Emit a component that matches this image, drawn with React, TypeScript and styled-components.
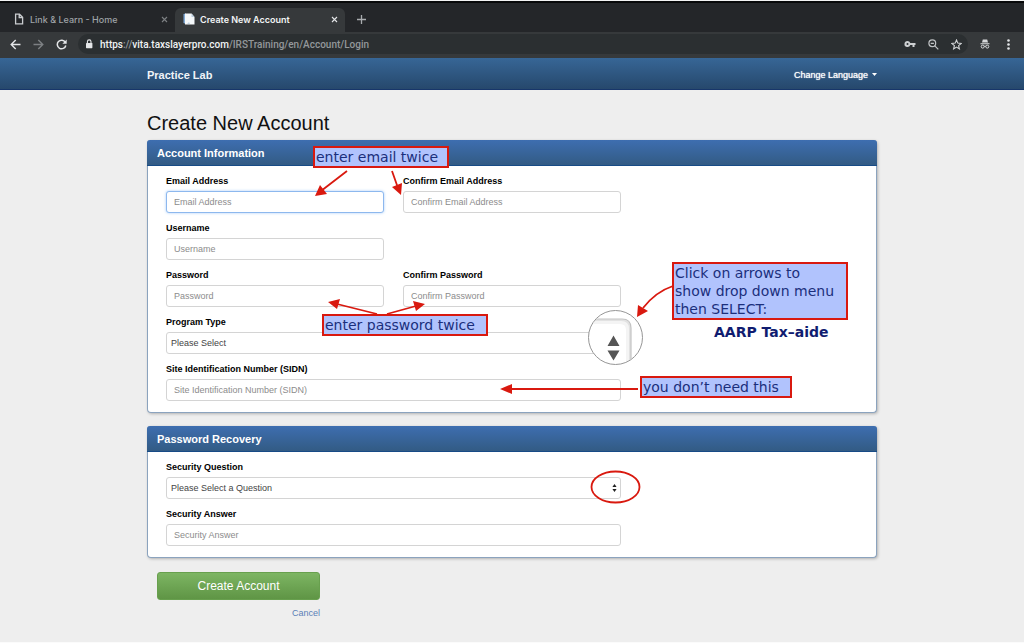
import React from "react";
import styled, { createGlobalStyle, css } from "styled-components";

const GlobalStyle = createGlobalStyle`
  *, *::before, *::after { box-sizing: border-box; }
  body {
    margin: 0;
    background: #eeeeee;
    color: #111;
    font-family: "Liberation Sans", Arial, sans-serif;
  }
`;

const Shell = styled.div`
  min-height: 100vh;
  border-top: 1px solid #f2f2f2;
  border-bottom: 1px solid #fbfbfb;
`;

const TabStrip = styled.div`
  display: flex;
  align-items: flex-end;
  height: 31px;
  border-top: 2px solid #08090a;
  background: #242629;
  font-family: Roboto, sans-serif;
`;

const Tab = styled.div<{ $active?: boolean }>`
  display: flex;
  align-items: center;
  gap: 5px;
  flex: 0 1 ${(p) => (p.$active ? "170px" : "175px")};
  height: 24px;
  padding: 0 5px 2px ${(p) => (p.$active ? "8px" : "13px")};
  border-radius: 6px 6px 0 0;
  background: ${(p) => (p.$active ? "#36393b" : "transparent")};
  color: ${(p) => (p.$active ? "#f1f3f4" : "#9fa3a7")};
  font-family: Inter, sans-serif;
  font-size: 9px;
  font-weight: ${(p) => (p.$active ? 600 : 500)};
`;

const TabTitle = styled.span`
  flex: 1;
  white-space: nowrap;
`;

const ChromeButton = styled.button<{ $dim?: boolean }>`
  display: flex;
  align-items: center;
  justify-content: center;
  width: 12px;
  height: 12px;
  padding: 0;
  border: 0;
  background: none;
  color: ${(p) => (p.$dim ? "#7d8083" : "#e4e6e8")};
`;

const NewTab = styled.div`
  display: flex;
  align-items: center;
  height: 24px;
  padding: 0 0 2px 10px;
`;

const Toolbar = styled.div`
  display: flex;
  align-items: center;
  gap: 11px;
  height: 26px;
  padding: 0 10px 2px 9px;
  background: #36393b;
`;

const AddressBar = styled.div`
  display: flex;
  flex: 1;
  align-items: center;
  gap: 11px;
  height: 20px;
  padding: 0 6px 0 5px;
  border-radius: 10px;
  background: #2b2f31;
`;

const Url = styled.span`
  flex: 1;
  color: #94989b;
  font-family: Roboto, sans-serif;
  font-size: 10px;
  font-weight: 500;
  white-space: nowrap;
  margin-left: -6px;
`;

const UrlHost = styled.span`
  color: #f1f3f4;
`;

const NavBar = styled.header`
  height: 32px;
  padding: 0 16px;
  border-bottom: 1px solid #17366a;
  background: linear-gradient(#376696, #26486c);
  color: #fff;
`;

const NavInner = styled.div`
  display: flex;
  align-items: center;
  justify-content: space-between;
  max-width: 730px;
  height: 31px;
  margin: 0 auto;
  padding-top: 2px;
`;

const Brand = styled.a`
  color: #f0f4f8;
  font-size: 11px;
  font-weight: 700;
  text-decoration: none;
`;

const LanguageButton = styled.button`
  display: flex;
  align-items: center;
  gap: 4px;
  padding: 0;
  border: 0;
  background: none;
  color: #fff;
  font: 9px "Liberation Sans", Arial, sans-serif;
  text-shadow: 0 0 1px #fff;
`;

const Page = styled.main`
  padding: 0 16px;
`;

const Content = styled.div`
  position: relative;
  max-width: 730px;
  min-height: 552px;
  margin: 0 auto;
  padding-top: 20px;
`;

const Title = styled.h1`
  margin: 0 0 4px;
  color: #111;
  font-size: 20px;
  font-weight: 400;
  line-height: 26px;
`;

const Panel = styled.section`
  margin-bottom: 13px;
  border: 1px solid #8ba3be;
  border-top: 0;
  border-radius: 4px;
  background: #fff;
  box-shadow: 1px 1px 3px rgba(0, 0, 0, 0.25);
`;

const PanelHeading = styled.h2`
  height: 26px;
  margin: 0 -1px;
  padding: 0 10px;
  border-bottom: 1px solid #174b86;
  border-radius: 3px 3px 0 0;
  background: linear-gradient(#3e6eb0, #325b84);
  color: #fff;
  font-size: 11px;
  line-height: 26px;
`;

const Fields = styled.div`
  display: grid;
  grid-template-columns: 1fr 1fr;
  gap: 8px 19px;
  max-width: 491px;
  padding: 8px 18px 11px;
`;

const Field = styled.div<{ $wide?: boolean; $first?: boolean }>`
  display: flex;
  flex-direction: column;
  gap: 3px;
  ${(p) => p.$wide && "grid-column: 1 / -1;"}
  ${(p) => p.$first && "grid-column-start: 1;"}
`;

const Label = styled.label`
  color: #000;
  font-size: 9px;
  font-weight: 700;
  line-height: 14px;
`;

const control = css`
  width: 100%;
  height: 22px;
  border: 1px solid #d4d4d4;
  border-radius: 3px;
  background: #fff;
  font: 9px "Liberation Sans", Arial, sans-serif;
  outline: 0;
`;

const Input = styled.input<{ $focused?: boolean }>`
  ${control}
  padding: 0 7px;
  ${(p) => p.$focused && "border-color: #8db8ee; box-shadow: 0 0 3px #a9cdf8;"}
  &::placeholder { color: #8c8c8c; opacity: 1; }
`;

const SelectWrap = styled.div`
  display: grid;
  align-items: center;
  & > * { grid-area: 1 / 1; }
  & > svg { justify-self: end; margin-right: 4px; pointer-events: none; }
`;

const Select = styled.select`
  ${control}
  appearance: none;
  padding: 0 4px;
  color: #444;
`;

const Actions = styled.div`
  display: flex;
  flex-direction: column;
  align-items: flex-end;
  gap: 6px;
  width: 163px;
  margin: 14px 0 0 10px;
`;

const Submit = styled.button`
  width: 100%;
  height: 28px;
  border: 1px solid #68a04e;
  border-radius: 3px;
  background: linear-gradient(#7db563, #5f9545);
  color: #fff;
  font: 12px "Liberation Sans", Arial, sans-serif;
`;

const Cancel = styled.a`
  color: #5b80b8;
  font-size: 9px;
  line-height: 14px;
  text-decoration: none;
`;

const Drawing = styled.svg`
  position: absolute;
  top: 0;
  left: 0;
  overflow: visible;
  pointer-events: none;
`;

const Note = styled.p<{ $x: number; $y: number; $w: number }>`
  position: absolute;
  left: ${(p) => p.$x}px;
  top: ${(p) => p.$y}px;
  width: ${(p) => p.$w}px;
  margin: 0;
  padding: 0 1px;
  border: 2px solid #d9190f;
  background: #b1c3fd;
  color: #1b2f7c;
  font: 14px/18px "DejaVu Sans", sans-serif;
  white-space: nowrap;
`;

const PlainNote = styled(Note)`
  border-color: transparent;
  background: none;
  color: #101c70;
  font-weight: 700;
`;

const CloseIcon = () => (
  <svg width="7" height="7" viewBox="0 0 7 7" stroke="currentColor" strokeWidth="1.1">
    <path d="M1 1l5 5M6 1L1 6" />
  </svg>
);

type FieldProps = {
  id: string;
  label: string;
  type?: string;
  wide?: boolean;
  first?: boolean;
  focused?: boolean;
};

const TextField = ({ id, label, type = "text", wide, first, focused }: FieldProps) => (
  <Field $wide={wide} $first={first}>
    <Label htmlFor={id}>{label}</Label>
    <Input id={id} type={type} placeholder={label} $focused={focused} />
  </Field>
);

const SelectField = ({ id, label, option }: { id: string; label: string; option: string }) => (
  <Field $wide>
    <Label htmlFor={id}>{label}</Label>
    <SelectWrap>
      <Select id={id}>
        <option>{option}</option>
      </Select>
      <svg width="5" height="8" viewBox="0 0 5 8" fill="#222">
        <path d="M2.5 0L4.6 3H.4zM2.5 8L.4 5h4.2z" />
      </svg>
    </SelectWrap>
  </Field>
);

const Annotations = () => (
  <>
    <Drawing width="730" height="552" viewBox="147 90 730 552" fill="none">
      <g stroke="#d9190f" strokeWidth="1.8">
        <path d="M347 171L321 191M392 171L398 188M377 314L337 304M387 314L416 306M638 389H510M673 286C658 291 650 299 643 308" />
        <ellipse cx="615.5" cy="487" rx="24" ry="15.5" />
      </g>
      <g fill="#d9190f">
        <path d="M315 196L320 185L327 194zM401 195L392 187L402 183zM328 302L340 299L337 309zM425 304L413 301L416 311zM500 389L512 384V394zM637 317L638 305L648 311z" />
      </g>
      <clipPath id="lens"><circle cx="615.5" cy="337.5" r="26.5" /></clipPath>
      <circle cx="615.5" cy="337.5" r="27" fill="#fff" />
      <g clipPath="url(#lens)">
        <path d="M585 321.500H620Q628.500 321.500 628.500 330V370" stroke="#f4f4f4" strokeWidth="5" />
        <path d="M585 320H621Q630 320 630 329V370" stroke="#e2e2e2" strokeWidth="2" />
        <path d="M585 319H622Q631 319 631 328V370" stroke="#c3c3c3" strokeWidth="1.2" />
      </g>
      <circle cx="615.5" cy="337.5" r="27" stroke="#969696" />
      <path d="M613.5 335.5L619.5 346H607.5zM613.5 360.5L607.5 350.500H619.5z" fill="#555" />
    </Drawing>
    <Note $x={166} $y={56} $w={136}>enter email twice</Note>
    <Note $x={175} $y={224} $w={166}>enter password twice</Note>
    <Note $x={525} $y={172} $w={176}>
      Click on arrows to<br />show drop down menu<br />then SELECT:
    </Note>
    <PlainNote $x={564} $y={231} $w={130}>AARP Tax–aide</PlainNote>
    <Note $x={493} $y={286} $w={152}>you don’t need this</Note>
  </>
);

export default function App() {
  return (
    <Shell>
      <GlobalStyle />
      <TabStrip>
        <Tab>
          <svg width="12" height="12" viewBox="0 0 12 12" fill="none" stroke="#c9cccf" strokeWidth="1.3">
            <path d="M2.6 1.1H6.5L9.6 4.2V10.9H2.6zM6.2 1.3V4.5H9.5" />
          </svg>
          <TabTitle>Link &amp; Learn - Home</TabTitle>
          <ChromeButton $dim aria-label="Close Link & Learn tab"><CloseIcon /></ChromeButton>
        </Tab>
        <Tab $active>
          <svg width="12" height="12" viewBox="0 0 12 12">
            <path d="M.5 1L3 .5V11L.5 10z" fill="#80a9d5" />
            <path d="M2 .5H8.500L11.500 4V11.500H2z" fill="#f5f8fa" />
            <path d="M8.500 .5V4H11.500M4 11L6 9L7 11" fill="#bdcfdf" />
          </svg>
          <TabTitle>Create New Account</TabTitle>
          <ChromeButton aria-label="Close Create New Account tab"><CloseIcon /></ChromeButton>
        </Tab>
        <NewTab>
          <ChromeButton aria-label="New tab">
            <svg width="9" height="9" viewBox="0 0 9 9" stroke="#a9acaf" strokeWidth="1.3"><path d="M4.5 0V9M0 4.5H9" /></svg>
          </ChromeButton>
        </NewTab>
      </TabStrip>
      <Toolbar>
        <ChromeButton aria-label="Back">
          <svg width="11" height="11" viewBox="0 0 11 11" fill="none" stroke="currentColor" strokeWidth="1.4"><path d="M10.5 5.5H1.5M5.7 1L1.2 5.5L5.7 10" /></svg>
        </ChromeButton>
        <ChromeButton aria-label="Forward" $dim>
          <svg width="11" height="11" viewBox="0 0 11 11" fill="none" stroke="currentColor" strokeWidth="1.4"><path d="M.5 5.5H9.5M5.3 1L9.8 5.5L5.3 10" /></svg>
        </ChromeButton>
        <ChromeButton aria-label="Reload">
          <svg width="11" height="11" viewBox="0 0 11 11" fill="none" stroke="currentColor" strokeWidth="1.5"><path d="M9.3 3.3A4.3 4.3 0 1 0 9.8 6.5" /><path d="M10.7 .5V4.8H6.4z" fill="currentColor" stroke="none" /></svg>
        </ChromeButton>
        <AddressBar>
          <svg width="12" height="12" viewBox="0 0 12 12" fill="none"><rect x="3" y="5" width="6.4" height="5.2" rx=".6" fill="#e4e6e8" /><path d="M4.4 5V3.7a1.800 1.800 0 0 1 3.600 0V5" stroke="#e4e6e8" strokeWidth="1.1" /></svg>
          <Url><UrlHost>https</UrlHost>://<UrlHost>vita.taxslayerpro.com</UrlHost>/IRSTraining/en/Account/Login</Url>
          <ChromeButton aria-label="Saved passwords">
            <svg width="12" height="8" viewBox="0 0 12 8" fill="#cdd0d2"><path fillRule="evenodd" d="M3.5 1A3 3 0 1 0 6.3 5H8.5V7H10.5V5H11.5V3H6.3A3 3 0 0 0 3.5 1zM3.5 3a1 1 0 1 1 0 2a1 1 0 0 1 0-2z" /></svg>
          </ChromeButton>
          <ChromeButton aria-label="Zoom">
            <svg width="11" height="11" viewBox="0 0 11 11" fill="none" stroke="#c0c3c5" strokeWidth="1.2"><circle cx="4.3" cy="4.3" r="3.4" /><path d="M6.8 6.8L10.3 10.3M2.7 4.3H5.9" /></svg>
          </ChromeButton>
          <ChromeButton aria-label="Bookmark">
            <svg width="11" height="11" viewBox="0 0 11 11" fill="none" stroke="#d3d5d7" strokeWidth="1.1"><path d="M5.5 1L6.8 4.1L10.2 4.4L7.6 6.6L8.4 9.9L5.5 8.1L2.6 9.9L3.4 6.6L.8 4.4L4.2 4.1z" /></svg>
          </ChromeButton>
        </AddressBar>
        <ChromeButton aria-label="Incognito">
          <svg width="10" height="10" viewBox="0 0 10 10" fill="#d8dadc"><path d="M2.8 .5H7.2L8 3.5H2zM.5 4.3H9.5V5.3H.5z" /><g fill="none" stroke="#d8dadc"><circle cx="2.7" cy="7.6" r="1.5" /><circle cx="7.3" cy="7.6" r="1.5" /><path d="M4.2 7.3H5.8" /></g></svg>
        </ChromeButton>
        <ChromeButton aria-label="Menu">
          <svg width="3" height="11" viewBox="0 0 3 11" fill="#e4e6e8"><circle cx="1.5" cy="1.5" r="1.3" /><circle cx="1.5" cy="5.5" r="1.3" /><circle cx="1.5" cy="9.5" r="1.3" /></svg>
        </ChromeButton>
      </Toolbar>
      <NavBar>
        <NavInner>
          <Brand href="#">Practice Lab</Brand>
          <LanguageButton>
            Change Language
            <svg width="5" height="3" viewBox="0 0 5 3" fill="#fff"><path d="M0 0H5L2.5 3z" /></svg>
          </LanguageButton>
        </NavInner>
      </NavBar>
      <Page>
        <Content>
          <Title>Create New Account</Title>
          <Panel>
            <PanelHeading>Account Information</PanelHeading>
            <Fields>
              <TextField id="email" label="Email Address" type="email" focused />
              <TextField id="confirm-email" label="Confirm Email Address" type="email" />
              <TextField id="username" label="Username" />
              <TextField id="password" label="Password" type="password" first />
              <TextField id="confirm-password" label="Confirm Password" type="password" />
              <SelectField id="program" label="Program Type" option="Please Select" />
              <TextField id="sidn" label="Site Identification Number (SIDN)" wide />
            </Fields>
          </Panel>
          <Panel>
            <PanelHeading>Password Recovery</PanelHeading>
            <Fields>
              <SelectField id="question" label="Security Question" option="Please Select a Question" />
              <TextField id="answer" label="Security Answer" wide />
            </Fields>
          </Panel>
          <Actions>
            <Submit>Create Account</Submit>
            <Cancel href="#">Cancel</Cancel>
          </Actions>
          <Annotations />
        </Content>
      </Page>
    </Shell>
  );
}
